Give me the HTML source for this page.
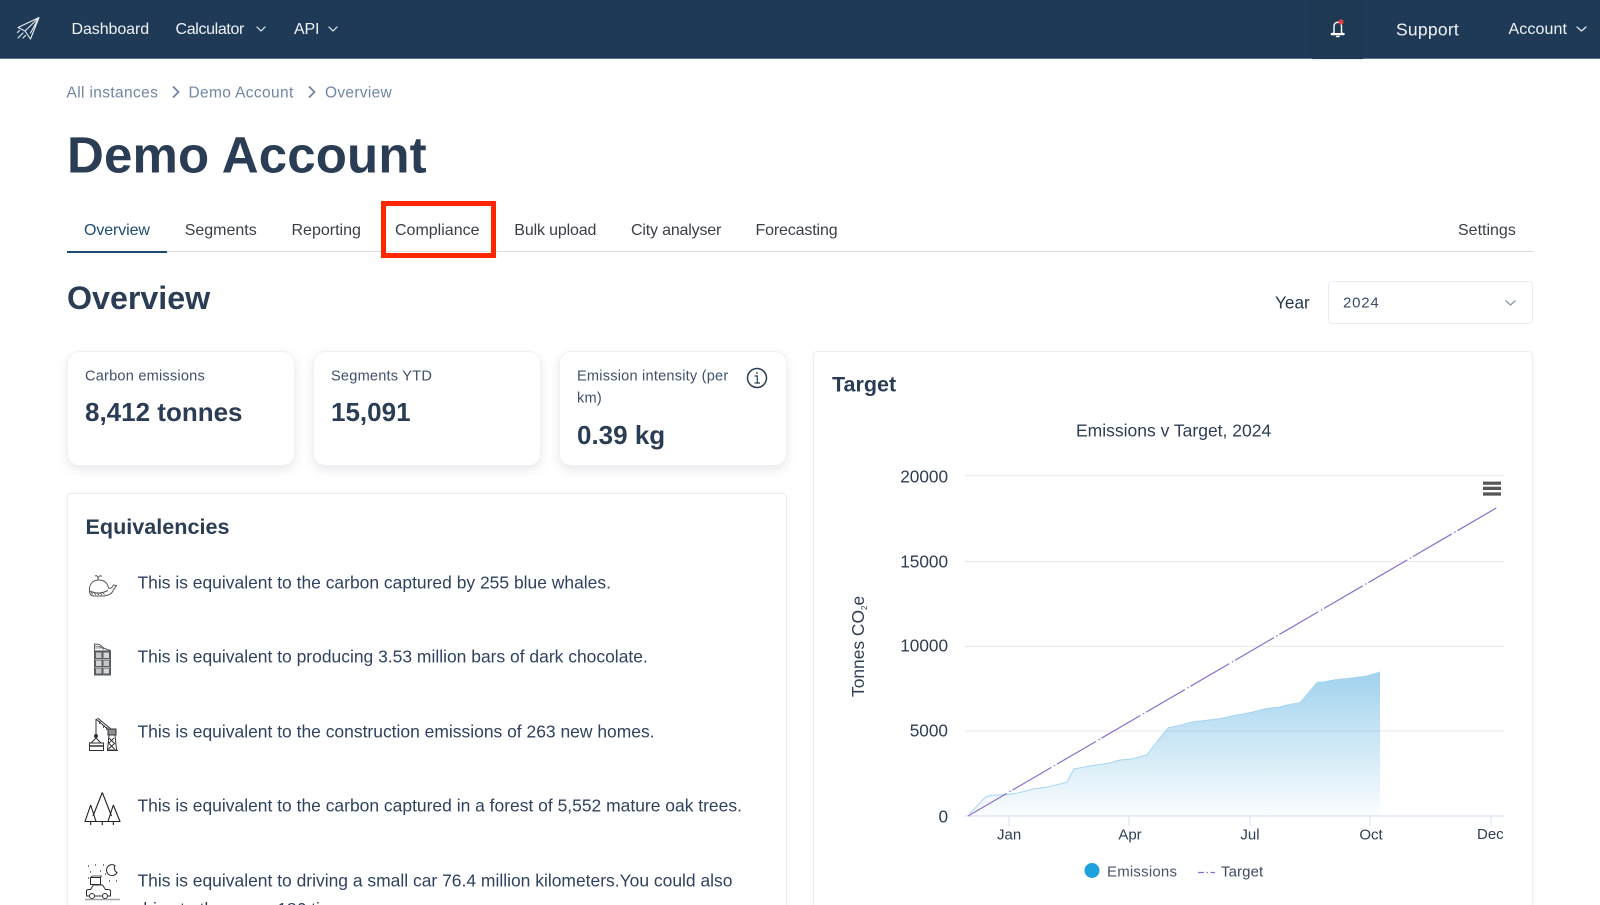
<!DOCTYPE html>
<html><head><meta charset="utf-8"><style>
*{box-sizing:border-box}
html,body{margin:0;padding:0;width:1600px;height:905px;overflow:hidden;background:#fff;font-family:"Liberation Sans",sans-serif}
#p{position:relative;width:1600px;height:905px;overflow:hidden;background:#fff}
.t{position:absolute;white-space:nowrap;line-height:1;transform:translateY(-50%)}
.nav{position:absolute;left:0;top:0;width:1600px;height:59px;background:#1e3a56;border-bottom:1px solid #5d7288}
.n{color:#f0f3f6;font-size:16px}
.bc{color:#7186a5;font-size:15.5px;letter-spacing:.36px}
.tab{color:#3a3f47;font-size:16px}
.card{position:absolute;background:#fff;border:1px solid #f0f1f4;border-radius:12px;box-shadow:0 4px 10px rgba(30,40,60,.1)}
.lab{color:#3f516c;font-size:14.6px;letter-spacing:.2px}
.val{color:#2b3d55;font-size:26px;font-weight:700}
.eq{color:#2f4260;font-size:17.47px}
svg{position:absolute;overflow:hidden}
</style></head><body><div id="p">
<div class="nav"></div>
<div style="position:absolute;left:1312px;top:0;width:51px;height:59px;background:#1d3954;box-shadow:0 1px 2px rgba(0,0,0,.1)"></div>

<svg style="left:0;top:0" width="60" height="59" fill="none" stroke="#e8edf2" stroke-width="1.1" stroke-linejoin="round" stroke-linecap="round">
<path d="M39 17.5 18 27.5l7 3.5 5.5 8zM39 17.5 25 31M39 17.5 30.5 33"/>
<path d="M23 33l-5 5M19.5 30.5l-2 2M25.500 35.500l-2.500 2.500"/></svg>

<div class="t n" style="left:71.5px;top:30px;letter-spacing:-.08px">Dashboard</div>
<div class="t n" style="left:175.5px;top:30px;letter-spacing:-.35px">Calculator</div>
<svg style="left:0;top:0" width="1600" height="59" fill="none" stroke="#e8edf2" stroke-width="1.2" stroke-linecap="round" stroke-linejoin="round">
<path d="M257 27l4 4 4-4M329 27l4 4 4-4M1577 27l4.500 4 4.500-4"/></svg>
<div class="t n" style="left:294px;top:30px;letter-spacing:-.2px">API</div>
<div class="t n" style="left:1396px;top:29.5px;font-size:17.5px;letter-spacing:.25px">Support</div>
<div class="t n" style="left:1508.500px;top:30px;letter-spacing:.1px">Account</div>
<svg style="left:0;top:0" width="1600" height="59" fill="none" stroke="#fff" stroke-width="1.4" stroke-linejoin="round">
<path d="M1334 32.500v-6.500a3.600 3.600 0 0 1 7.500 0v6.500l2.500 2h-12.500zM1330.800 33.700h13.800"/><path d="M1336.500 36.500h2.500" stroke-linecap="round"/>
<circle cx="1341" cy="22" r="2.600" fill="#e5403f" stroke="none"/></svg>

<div class="t bc" style="left:66.500px;top:92.500px">All instances</div>
<div class="t bc" style="left:188.500px;top:92.500px">Demo Account</div>
<div class="t bc" style="left:325px;top:92.500px;letter-spacing:.3px">Overview</div>
<svg style="left:0;top:0" width="400" height="110" fill="none" stroke="#7186a5" stroke-width="1.800"><path d="M173 86.500l5.500 5.500-5.500 5.500M309 86.500l5.500 5.500-5.500 5.500"/></svg>

<div class="t" style="left:67px;top:155px;font-size:51px;font-weight:700;color:#2b3d55;letter-spacing:.15px">Demo Account</div>

<div class="t tab" style="left:84px;top:231px;color:#1e4a78;letter-spacing:-.1px">Overview</div>
<div class="t tab" style="left:184.700px;top:231px">Segments</div>
<div class="t tab" style="left:291.500px;top:231px">Reporting</div>
<div class="t tab" style="left:395px;top:231px">Compliance</div>
<div class="t tab" style="left:514.300px;top:231px;letter-spacing:-.15px">Bulk upload</div>
<div class="t tab" style="left:631px;top:231px;letter-spacing:-.18px">City analyser</div>
<div class="t tab" style="left:755.500px;top:231px;letter-spacing:-.15px">Forecasting</div>
<div class="t tab" style="left:1458px;top:231px">Settings</div>
<div style="position:absolute;left:67px;top:251px;width:1466px;height:1px;background:#d9dce1"></div>
<div style="position:absolute;left:67px;top:251px;width:100px;height:1.500px;background:#1e4a78"></div>
<div style="position:absolute;left:381px;top:201px;width:115px;height:57px;border:5.500px solid #ff2600"></div>

<div class="t" style="left:67px;top:298px;font-size:32.200px;font-weight:700;color:#2b3d55">Overview</div>
<div class="t" style="left:1275px;top:303px;font-size:17.200px;color:#27364d">Year</div>
<div style="position:absolute;left:1328px;top:281px;width:205px;height:43px;border:1px solid #e8edf5;border-radius:4px"></div>
<div class="t" style="left:1343px;top:303px;font-size:15px;color:#3a4d6b;letter-spacing:.8px">2024</div>
<svg style="left:0;top:0" width="1600" height="330" fill="none" stroke="#8090ab" stroke-width="1.200"><path d="M1505.500 300.500l5 4.500 5-4.500"/></svg>

<div class="card" style="left:67px;top:350.500px;width:228px;height:115.500px"></div>
<div class="card" style="left:312.500px;top:350.500px;width:228px;height:115.500px"></div>
<div class="card" style="left:558.500px;top:350.500px;width:228px;height:115.500px"></div>
<div class="t lab" style="left:85px;top:377px">Carbon emissions</div>
<div class="t val" style="left:85px;top:412px">8,412 tonnes</div>
<div class="t lab" style="left:331px;top:377px">Segments YTD</div>
<div class="t val" style="left:331px;top:412px">15,091</div>
<div class="t lab" style="left:577px;top:377px">Emission intensity (per</div>
<div class="t lab" style="left:577px;top:399px">km)</div>
<div class="t val" style="left:577px;top:434.500px">0.39 kg</div>
<svg style="left:0;top:0" width="800" height="400" fill="none" stroke="#2b3d55" stroke-width="1.500">
<circle cx="757" cy="378" r="9.500"/><path d="M754.500 376h2.800v6.500M754.500 383h5.500" stroke-width="1.200"/><circle cx="757" cy="373" r=".9" fill="#2b3d55" stroke="none"/></svg>

<div class="card" style="left:67px;top:493px;width:720px;height:412px;border-radius:4px 4px 0 0;border-bottom:0;border-color:#eceef2;box-shadow:0 1px 3px rgba(30,40,60,.06)"></div>
<div class="t" style="left:85.500px;top:527px;font-size:21.600px;font-weight:700;color:#2b3d55">Equivalencies</div>
<div class="t eq" style="left:137.500px;top:583px">This is equivalent to the carbon captured by 255 blue whales.</div>
<div class="t eq" style="left:137.500px;top:657px">This is equivalent to producing 3.53 million bars of dark chocolate.</div>
<div class="t eq" style="left:137.500px;top:732px">This is equivalent to the construction emissions of 263 new homes.</div>
<div class="t eq" style="left:137.500px;top:806px">This is equivalent to the carbon captured in a forest of 5,552 mature oak trees.</div>
<div class="t eq" style="left:137.500px;top:880.500px">This is equivalent to driving a small car 76.4 million kilometers.You could also</div>
<div style="position:absolute;left:137.500px;top:895px;width:400px;height:10px;overflow:hidden"><div class="eq" style="position:absolute;left:0;top:6px;line-height:1;white-space:nowrap">drive to the moon 186 times.</div></div>

<!-- whale -->
<svg style="left:0;top:0" width="130" height="905" fill="none" stroke="#55585c" stroke-width="1">
<path d="M89.500 592c-1-7 3-12 9-12 6 0 9 3 10 8 2 1 4-.500 5-3l3 .500-2 3-1 1c-1 4-5 6-10 6.500H94c-2 0-4-1-4.500-4.500z"/>
<path d="M90 591c6 3 12 2.500 18-.500"/><path d="M91 592l2 2.500M94 592.500l2 2.500M97 593l2 2M100 593l2 2M103 592.500l1.500 2" stroke-width=".9"/>
<path d="M98 580v-2M95 576c1.500-1 2.500 0 3 2 1-2 2.500-3 4-1.500"/>
</svg>
<!-- building -->
<svg style="left:0;top:0" width="130" height="905" fill="none" stroke="#5a5d61" stroke-width="1">
<path d="M94.500 644l5 .500 5 4 6 2V675h-16z"/>
<path d="M94.500 651h16" stroke-width="1.200"/>
<rect x="95.500" y="652" width="6.500" height="6.500" fill="#c4c6c9"/><rect x="103" y="652" width="6.500" height="6.500" fill="#d4d5d7"/>
<rect x="95.500" y="660" width="6.500" height="6.500" fill="#d4d5d7"/><rect x="103" y="660" width="6.500" height="6.500" fill="#c4c6c9"/>
<rect x="95.500" y="668" width="6.500" height="6" fill="#c4c6c9"/><rect x="103" y="668" width="6.500" height="6" fill="#d4d5d7"/>
<path d="M95 646l5 .500 4 3M95 648h6" stroke-width=".8"/>
</svg>
<!-- crane -->
<svg style="left:0;top:0" width="130" height="905" fill="none" stroke="#2e3136" stroke-width="1">
<path d="M96 719l14 12M97.500 718l13 10.500M96 719v10"/><path d="M100 721l-.500 3M104 725l-.500 3M107 727l-.500 3" stroke-width=".9"/>
<rect x="108" y="729" width="8" height="6" fill="#8d9093"/>
<path d="M109 735l-1.500 15h9l-1.500-15M109 738l5 5M114 738l-5 5M108.500 743l6 6M115 743l-6.500 6M107 750.500h11"/>
<path d="M96 729v6"/><circle cx="96" cy="736" r="1.500" fill="#2e3136"/>
<path d="M91 743l5-5 5 5" /><rect x="89.500" y="743" width="14" height="7.500"/><path d="M89.500 746h14" stroke-width="1.500"/>
</svg>
<!-- trees -->
<svg style="left:0;top:0" width="130" height="905" fill="none" stroke="#1f2226" stroke-width="1.100" stroke-linejoin="round">
<path d="M102.300 792.500 93 816M102.300 792.500 111.500 816"/>
<path d="M90.700 805 85 821.500H120L113.300 805M90.700 805 96 821.500M113.300 805 108 821.500"/>
<path d="M90.700 821.500v3.500M102.300 821.500v3.500M113.300 821.500v3.500"/>
</svg>
<!-- car -->
<svg style="left:0;top:0" width="130" height="905" fill="none" stroke="#2a2d31" stroke-width="1">
<path d="M89.500 896h-3v-5c0-1 1-1.500 2-1.500h2l3-4.500h9l3 4.500h3c1 0 2 .5 2 2v4.500h-2.500M94.500 896h8"/>
<circle cx="92" cy="896" r="2.500"/><circle cx="105" cy="896" r="2.500"/>
<rect x="90.500" y="877.500" width="10" height="7"/><path d="M90.500 877.500l2-1.500h9l-1 1.500" stroke-width=".8"/>
<path d="M115 865.500a5.500 5.500 0 1 0 2 7 5 5 0 0 1-2-7z"/>
<path d="M88 866h1M95 865h1M103 865h1M90 872h1M88 878h1M100 871h1M105 874h1M109 881h1M116 881h1" stroke-width="1.200"/>
<path d="M85 899.500h35" stroke="#a0a3a7" stroke-width="1.500"/>
</svg>

<!-- target card -->
<div class="card" style="left:813px;top:351px;width:720px;height:554px;border-radius:4px 4px 0 0;border-bottom:0;border-color:#eceef2;box-shadow:0 1px 3px rgba(30,40,60,.06)"></div>
<div class="t" style="left:832px;top:385px;font-size:21.500px;font-weight:700;color:#2b3d55">Target</div>
<div class="t" style="left:1076px;top:431px;font-size:17.500px;color:#2f3e55">Emissions v Target, 2024</div>

<svg style="left:0;top:0" width="1600" height="905" fill="none">
<defs><linearGradient id="g" gradientUnits="userSpaceOnUse" x1="0" y1="672" x2="0" y2="816"><stop offset="0" stop-color="#1e93d6" stop-opacity=".42"/><stop offset="1" stop-color="#1e93d6" stop-opacity=".02"/></linearGradient></defs>
<path d="M965 475.500H1504M965 561.500H1504M965 646.500H1504M965 731H1504" stroke="#ebecef" stroke-width="1.200"/>
<path d="M968 816L970 813.300 986 796.700 991.700 795.300 1006.700 794.700 1016.700 793.300 1033.300 789 1046.700 787.300 1066.700 782.300 1074 769 1090 766 1110 763 1120 760 1131.700 759 1146.700 755 1158.300 740 1168.300 727.700 1178.300 725.700 1193.300 721.700 1200 721 1220 718.700 1233.300 715.700 1253.300 712 1265 708.700 1280 707 1285 705.300 1300 702.700 1317.300 682.300 1325 681.700 1335 679.700 1350 678.300 1366.700 676 1380 672V816Z" fill="url(#g)"/>
<path d="M970 813.300 986 796.700 991.700 795.300 1006.700 794.700 1016.700 793.300 1033.300 789 1046.700 787.300 1066.700 782.300 1074 769 1090 766 1110 763 1120 760 1131.700 759 1146.700 755 1158.300 740 1168.300 727.700 1178.300 725.700 1193.300 721.700 1200 721 1220 718.700 1233.300 715.700 1253.300 712 1265 708.700 1280 707 1285 705.300 1300 702.700 1317.300 682.300 1325 681.700 1335 679.700 1350 678.300 1366.700 676 1380 672" stroke="#a5d5f0" stroke-width="1"/>
<path d="M965 816H1504M1009 816v10M1129 816v10M1250 816v10M1370 816v10M1491 816v10" stroke="#dbe3f3" stroke-width="1.200"/>
<path d="M968 816 1498 507" stroke="#8c6fcc" stroke-width="1.200" stroke-dasharray="45 3 1.500 2"/>
<path d="M1483 483.200H1501M1483 488.400H1501M1483 494H1501" stroke="#555" stroke-width="3.200"/>
<circle cx="1092" cy="870.500" r="7.500" fill="#1ea2df"/>
<path d="M1198 872.500h17" stroke="#8c6fcc" stroke-width="1.200" stroke-dasharray="6 2.500 1.500 2.500"/>
<text transform="translate(864 697) rotate(-90)" font-family="'Liberation Sans',sans-serif" font-size="17.400" fill="#2f3e55">Tonnes CO<tspan font-size="8" dy="3">2</tspan><tspan dy="-3">e</tspan></text>
</svg>
<div class="t" style="right:652px;top:477px;font-size:17.200px;color:#2f3e55">20000</div>
<div class="t" style="right:652px;top:562px;font-size:17.200px;color:#2f3e55">15000</div>
<div class="t" style="right:652px;top:646px;font-size:17.200px;color:#2f3e55">10000</div>
<div class="t" style="right:652px;top:731px;font-size:17.200px;color:#2f3e55">5000</div>
<div class="t" style="right:652px;top:816.500px;font-size:17.200px;color:#2f3e55">0</div>
<div class="t" style="left:997px;top:835px;font-size:15px;color:#2f3e55;width:24px;text-align:center">Jan</div>
<div class="t" style="left:1117px;top:835px;font-size:15px;color:#2f3e55;width:26px;text-align:center">Apr</div>
<div class="t" style="left:1238px;top:835px;font-size:15px;color:#2f3e55;width:24px;text-align:center">Jul</div>
<div class="t" style="left:1358px;top:835px;font-size:15px;color:#2f3e55;width:26px;text-align:center">Oct</div>
<div class="t" style="left:1477px;top:835px;width:27px;overflow:hidden;font-size:15px;color:#2f3e55;line-height:18px">Dec</div>
<div class="t" style="left:1107px;top:871.500px;font-size:15px;color:#475569;letter-spacing:.2px">Emissions</div>
<div class="t" style="left:1221px;top:871.500px;font-size:15px;color:#3c4a60;letter-spacing:.1px">Target</div>
</div></body></html>
